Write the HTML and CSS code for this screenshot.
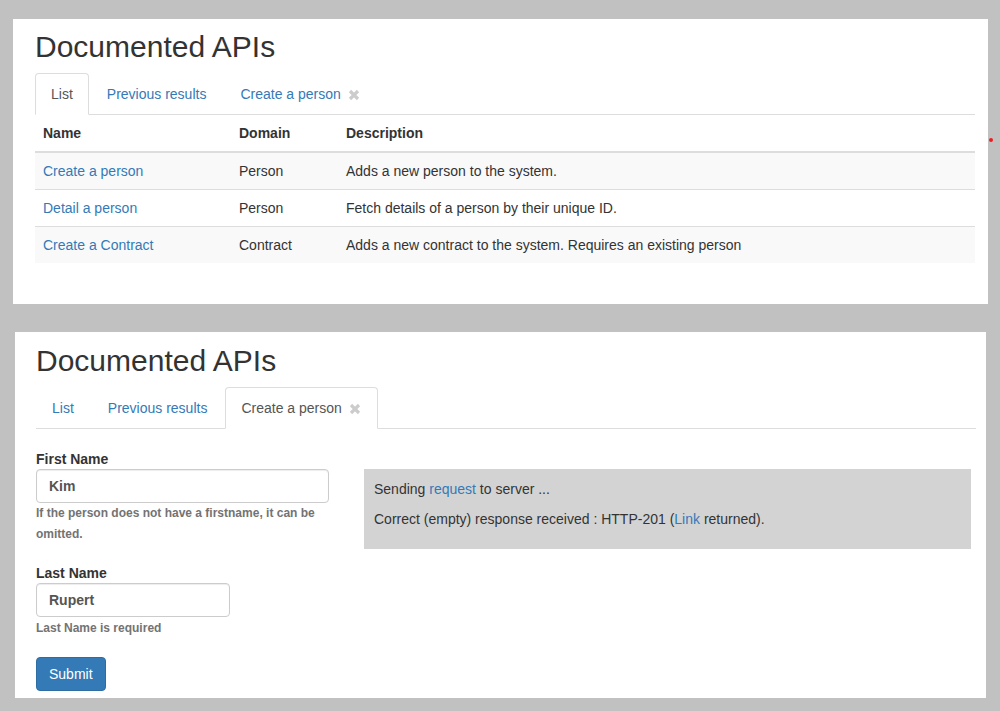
FILE: index.html
```html
<!DOCTYPE html>
<html lang="en">
<head>
<meta charset="UTF-8" />
<title>Documented APIs</title>
<link rel="stylesheet" href="styles.css">
</head>
<body>

<span class="red-dot"></span>

<!-- List tab -->
<section class="panel panel-list">
  <h2 class="page-title">Documented APIs</h2>
  <ul class="tabs">
    <li class="tab active"><a href="#">List</a></li>
    <li class="tab"><a href="#">Previous results</a></li>
    <li class="tab">
      <a href="#">Create a person<svg class="close-icon" viewBox="0 0 14 14"><path d="M3 3l8 8M11 3l-8 8"/></svg></a>
    </li>
  </ul>
  <table class="api-table">
    <thead>
      <tr><th class="col-name">Name</th><th class="col-domain">Domain</th><th>Description</th></tr>
    </thead>
    <tbody>
      <tr><td><a href="#">Create a person</a></td><td>Person</td><td>Adds a new person to the system.</td></tr>
      <tr><td><a href="#">Detail a person</a></td><td>Person</td><td>Fetch details of a person by their unique ID.</td></tr>
      <tr><td><a href="#">Create a Contract</a></td><td>Contract</td><td>Adds a new contract to the system. Requires an existing person</td></tr>
    </tbody>
  </table>
</section>

<!-- Create a person tab -->
<section class="panel panel-form">
  <h2 class="page-title">Documented APIs</h2>
  <ul class="tabs">
    <li class="tab"><a href="#">List</a></li>
    <li class="tab"><a href="#">Previous results</a></li>
    <li class="tab active">
      <a href="#">Create a person<svg class="close-icon" viewBox="0 0 14 14"><path d="M3 3l8 8M11 3l-8 8"/></svg></a>
    </li>
  </ul>
  <div class="form-row">
    <form class="person-form">
      <div class="form-group">
        <label for="firstName">First Name</label>
        <input id="firstName" class="input" type="text" value="Kim">
        <p class="help">If the person does not have a firstname, it can be omitted.</p>
      </div>
      <div class="form-group">
        <label for="lastName">Last Name</label>
        <input id="lastName" class="input input-short" type="text" value="Rupert">
        <p class="help">Last Name is required</p>
      </div>
      <button class="submit" type="button">Submit</button>
    </form>
    <div class="result-box">
      <p>Sending <a href="#">request</a> to server ...</p>
      <p>Correct (empty) response received : HTTP-201 (<a href="#">Link</a> returned).</p>
    </div>
  </div>
</section>

</body>
</html>
```

FILE: styles.css
```css
html, body {
  margin: 0;
  padding: 0;
}

body {
  position: relative;
  height: 711px;
  overflow: hidden;
  background-color: #c1c1c1;
  font-family: "Liberation Sans", Arial, sans-serif;
  font-size: 14px;
  line-height: 20px;
  color: #333;
}

a {
  color: #337ab7;
  text-decoration: none;
}

p {
  margin: 0;
}

.red-dot {
  position: absolute;
  left: 989px;
  top: 138px;
  width: 4px;
  height: 4px;
  border-radius: 50%;
  background-color: #ed1c24;
}

.panel {
  background-color: #fff;
}

.panel-list {
  width: 975px;
  margin: 19px 0 0 13px;
  padding: 11px 13px 41px 22px;
  box-sizing: border-box;
}

.panel-form {
  width: 971px;
  margin: 28px 0 0 15px;
  padding: 12px 10px 7px 21px;
  box-sizing: border-box;
}

.page-title {
  margin: 0 0 10px;
  font-size: 30px;
  font-weight: 400;
  line-height: 33px;
}

/* tabs */
.tabs {
  display: flex;
  margin: 0;
  padding: 0;
  list-style: none;
  border-bottom: 1px solid #ddd;
}

.tab {
  margin-bottom: -1px;
  margin-right: 2px;
}

.tab a {
  display: flex;
  align-items: center;
  padding: 10px 15px;
  border: 1px solid transparent;
  border-radius: 4px 4px 0 0;
}

.tab.active a {
  color: #555;
  background-color: #fff;
  border-color: #ddd #ddd #fff;
}

.close-icon {
  width: 14px;
  height: 14px;
  margin: 2px 0 0 6px;
  fill: none;
  stroke: #ccc;
  stroke-width: 3.2;
}

/* table */
.api-table {
  width: 100%;
  border-collapse: collapse;
}

.api-table th,
.api-table td {
  padding: 8px;
  text-align: left;
}

.api-table th {
  font-weight: 700;
  border-bottom: 2px solid #ddd;
}

.api-table td {
  border-top: 1px solid #ddd;
}

.api-table tbody tr:first-child td {
  border-top: 0;
}

.api-table tbody tr:nth-child(odd) {
  background-color: #f9f9f9;
}

.col-name {
  width: 180px;
}

.col-domain {
  width: 91px;
}

/* form */
.form-row {
  display: flex;
  margin-top: 20px;
}

.person-form {
  width: 293px;
  flex-shrink: 0;
}

.form-group {
  margin-bottom: 18px;
}

.form-group label {
  display: block;
  font-weight: 700;
}

.input {
  display: block;
  width: 100%;
  height: 34px;
  padding: 6px 12px;
  box-sizing: border-box;
  font-family: inherit;
  font-size: 14px;
  font-weight: 700;
  color: #555;
  background-color: #fff;
  border: 1px solid #ccc;
  border-radius: 4px;
  box-shadow: inset 0 1px 1px rgba(0, 0, 0, 0.075);
}

.input-short {
  width: 194px;
}

.help {
  font-size: 12px;
  font-weight: 700;
  line-height: 21px;
  color: #737373;
}

.form-group + .form-group .help {
  margin-top: 1px;
}

.submit {
  display: block;
  padding: 6px 12px;
  font-family: inherit;
  font-size: 14px;
  line-height: 20px;
  color: #fff;
  background-color: #337ab7;
  border: 1px solid #2e6da4;
  border-radius: 4px;
}

.result-box {
  flex: 1;
  align-self: flex-start;
  margin: 20px 5px 0 35px;
  padding: 10px;
  background-color: #d3d3d3;
}

.result-box p {
  margin-bottom: 10px;
}
```
